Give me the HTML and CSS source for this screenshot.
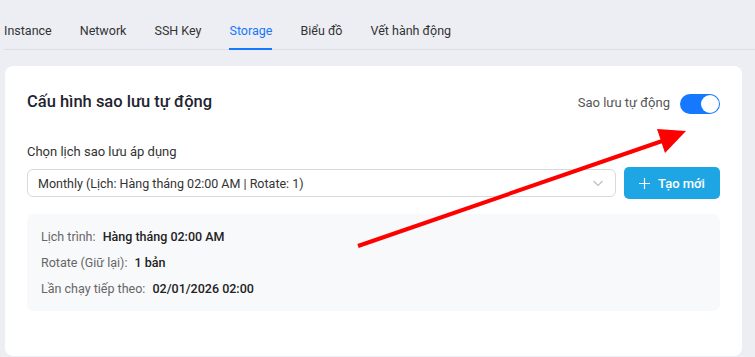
FILE: index.html
```html
<!DOCTYPE html>
<html lang="vi">
<head>
    <meta charset="UTF-8">
    <title>Storage</title>
    <link rel="stylesheet" href="styles.css">
</head>
<body>
    <nav class="tabs">
        <span class="tab">Instance</span>
        <span class="tab">Network</span>
        <span class="tab">SSH Key</span>
        <span class="tab active">Storage</span>
        <span class="tab">Biểu đồ</span>
        <span class="tab">Vết hành động</span>
    </nav>

    <div class="card">
        <div class="card-head">
            <h3 class="card-title">Cấu hình sao lưu tự động</h3>
            <label class="auto">
                <span>Sao lưu tự động</span>
                <span class="switch"><span class="knob"></span></span>
            </label>
        </div>

        <div class="field-label">Chọn lịch sao lưu áp dụng</div>
        <div class="pick-row">
            <div class="select">
                <span>Monthly (Lịch: Hàng tháng 02:00 AM | Rotate: 1)</span>
                <svg class="chev" width="12" height="12" viewBox="0 0 12 12"><path d="M1.5 4l4.5 4.5 4.5-4.5" fill="none" stroke="#b8bcc4" stroke-width="1.1"/></svg>
            </div>
            <button class="btn-new">
                <svg class="plus" width="11" height="11" viewBox="0 0 11 11"><path d="M5.5 0v11M0 5.5h11" stroke="#fff" stroke-width="1.2"/></svg>
                Tạo mới
            </button>
        </div>

        <div class="info">
            <div class="info-row"><span class="k">Lịch trình:</span> <b>Hàng tháng 02:00 AM</b></div>
            <div class="info-row"><span class="k">Rotate (Giữ lại):</span> <b>1 bản</b></div>
            <div class="info-row"><span class="k">Lần chạy tiếp theo:</span> <b>02/01/2026 02:00</b></div>
        </div>
    </div>

    <svg class="arrow" width="755" height="357" viewBox="0 0 755 357">
        <line x1="358" y1="246" x2="668" y2="139" stroke="#ff0000" stroke-width="4"/>
        <polygon points="657,129 686,131 665,153" fill="#ff0000"/>
    </svg>
</body>
</html>
```
FILE: styles.css
```css
*{
    margin:0;
    padding:0;
    box-sizing: border-box;
}

body {
    background-color: #eceef3;
    font-family: Roboto, sans-serif;
    font-size: 13px;
    color: #333;
    width: 755px;
    height: 357px;
    overflow: hidden;
    position: relative;
}

.tabs {
    display: flex;
    gap: 28px;
    margin-left: 4px;
    border-bottom: 1px solid #dcdfe5;
}

.tab {
    padding: 22px 0 8px;
    line-height: 18px;
    font-size: 12.5px;
    color: #333;
    border-bottom: 2px solid transparent;
    margin-bottom: -1px;
}

.tab.active {
    color: #1677ff;
    border-bottom-color: #1677ff;
}

.card {
    margin: 16px 13px 0 5px;
    background: #fff;
    border-radius: 8px;
    padding: 23px 22px 45px;
}

.card-head {
    display: flex;
    justify-content: space-between;
    align-items: center;
    height: 26px;
}

.card-title {
    font-size: 16.5px;
    font-weight: 500;
    color: #1f2430;
    margin-top: -2px;
}

.auto {
    display: flex;
    align-items: center;
    gap: 10px;
    color: #555;
}

.switch {
    width: 40px;
    height: 20px;
    border-radius: 10px;
    background: #1677ff;
    position: relative;
    margin-top: 3px;
}

.knob {
    position: absolute;
    top: 1px;
    right: 1px;
    width: 18px;
    height: 18px;
    border-radius: 50%;
    background: #fff;
}

.field-label {
    margin-top: 28px;
    line-height: 18px;
    color: #333;
}

.pick-row {
    display: flex;
    gap: 8px;
    margin-top: 6px;
    align-items: center;
}

.select {
    flex: 1;
    height: 28px;
    border: 1px solid #d9d9d9;
    border-radius: 6px;
    display: flex;
    align-items: center;
    justify-content: space-between;
    padding: 0 11px 0 10px;
    font-size: 12.5px;
    color: #333;
}

.btn-new {
    width: 96px;
    height: 32px;
    border: none;
    border-radius: 5px;
    background: #1ea6e4;
    color: #fff;
    font-family: inherit;
    font-size: 13px;
    font-weight: 500;
    display: flex;
    align-items: center;
    justify-content: center;
    gap: 8px;
}

.info {
    margin-top: 15px;
    background: #f8f9fb;
    border-radius: 7px;
    padding: 10px 14px;
    height: 97px;
    font-size: 12.5px;
}

.info-row {
    line-height: 26px;
}

.info-row .k {
    color: #666;
    margin-right: 4px;
}

.info-row b {
    color: #222;
    font-weight: 500;
}

.arrow {
    position: absolute;
    left: 0;
    top: 0;
    pointer-events: none;
}
```
